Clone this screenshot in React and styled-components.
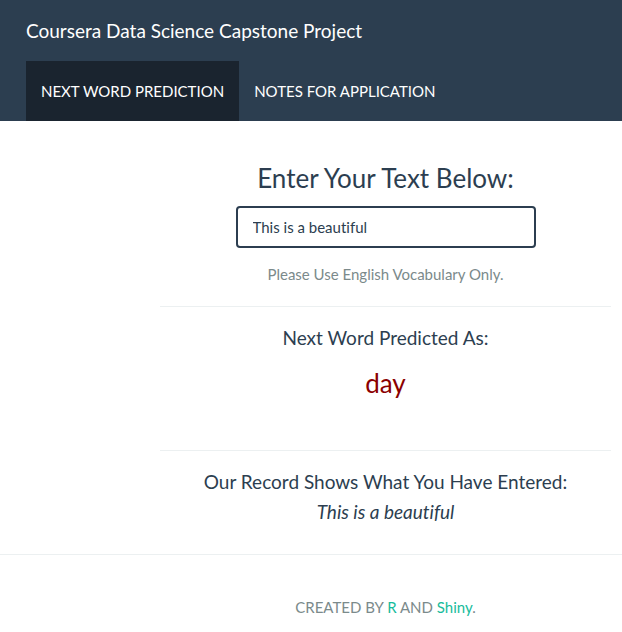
import styled, { createGlobalStyle } from "styled-components";

const GlobalStyle = createGlobalStyle`
  body {
    margin: 0;
    background: #ffffff;
    font-family: Lato, "Open Sans", sans-serif;
    font-variant-ligatures: none;
    color: #2c3e50;
  }
`;

const Navbar = styled.header`
  background-color: #2c3e50;
  display: flex;
  flex-direction: column;
`;

const Brand = styled.div`
  height: 61px;
  line-height: 61px;
  padding-left: 26px;
  color: #ffffff;
  font-size: 19px;
`;

const Tabs = styled.nav`
  display: flex;
  padding-left: 26px;
  height: 60px;
`;

const Tab = styled.div`
  padding: 0 15px;
  line-height: 60px;
  font-size: 15px;
  color: #ffffff;
  text-transform: uppercase;
  background-color: ${(p) => (p.$active ? "#1a242f" : "transparent")};
`;

const Main = styled.main`
  display: grid;
  grid-template-columns: 160px 451px;
`;

const Panel = styled.section`
  display: flex;
  flex-direction: column;
  align-items: center;
  text-align: center;
`;

const Heading = styled.h3`
  margin: 43px 0 0;
  font-size: 26px;
  line-height: 29px;
  font-weight: 400;
`;

const Input = styled.input`
  box-sizing: border-box;
  margin-top: 13px;
  width: 300px;
  height: 42px;
  padding: 0 15px;
  border: 2px solid #2c3e50;
  border-radius: 4px;
  font-family: inherit;
  font-size: 15px;
  font-variant-ligatures: none;
  color: #2c3e50;
  outline: none;
`;

const Hint = styled.p`
  margin: 16px 0 0;
  font-size: 15px;
  line-height: 21px;
  color: #7b8a8b;
`;

const Rule = styled.hr`
  align-self: stretch;
  margin: ${(p) => p.$top}px 0 0;
  border: 0;
  border-top: 1px solid #ecf0f1;
`;

const Label = styled.h4`
  margin: 20px 0 0;
  font-size: 19px;
  line-height: 21px;
  font-weight: 400;
`;

const Prediction = styled.div`
  margin-top: 21px;
  font-size: 26px;
  line-height: 29px;
  color: #8b0000;
`;

const Echo = styled.div`
  margin-top: 9px;
  font-size: 19px;
  line-height: 21px;
  font-style: italic;
`;

const FullRule = styled.hr`
  margin: 32px 0 0;
  border: 0;
  border-top: 1px solid #ecf0f1;
`;

const Footer = styled.footer`
  display: grid;
  grid-template-columns: 160px 451px;
  padding-top: 42px;
  padding-bottom: 20px;
`;

const Credit = styled.p`
  margin: 0;
  text-align: center;
  font-size: 15px;
  line-height: 21px;
  color: #7b8a8b;
`;

const Link = styled.span`
  color: #18bc9c;
`;

export default function App() {
  return (
    <>
      <GlobalStyle />
      <Navbar>
        <Brand>Coursera Data Science Capstone Project</Brand>
        <Tabs>
          <Tab $active>Next Word Prediction</Tab>
          <Tab>Notes for Application</Tab>
        </Tabs>
      </Navbar>
      <Main>
        <div />
        <Panel>
          <Heading>Enter Your Text Below:</Heading>
          <Input defaultValue="This is a beautiful" />
          <Hint>Please Use English Vocabulary Only.</Hint>
          <Rule $top={21} />
          <Label>Next Word Predicted As:</Label>
          <Prediction>day</Prediction>
          <Rule $top={52} />
          <Label>Our Record Shows What You Have Entered:</Label>
          <Echo>This is a beautiful</Echo>
        </Panel>
      </Main>
      <FullRule />
      <Footer>
        <div />
        <Credit>
          CREATED BY <Link>R</Link> AND <Link>Shiny</Link>.
        </Credit>
      </Footer>
    </>
  );
}
